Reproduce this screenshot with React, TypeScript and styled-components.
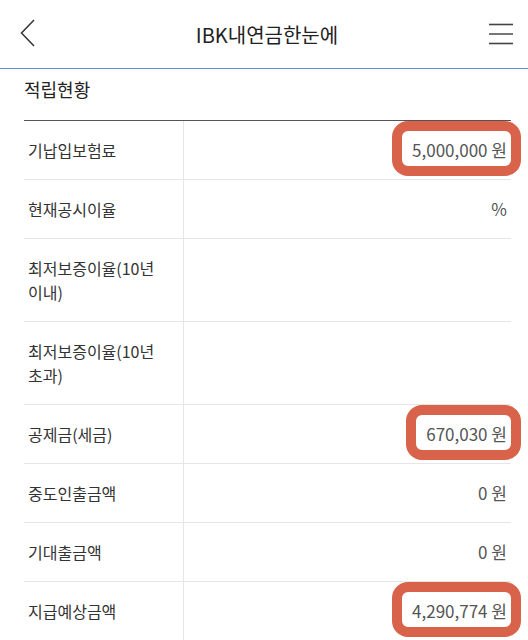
import React from 'react';
import styled, {createGlobalStyle} from 'styled-components';

type RowType = {
    label: string
    value?: string
    marked?: boolean
}

const rows: RowType[] = [
    {label: '기납입보험료', value: '5,000,000 원', marked: true},
    {label: '현재공시이율', value: '%'},
    {label: '최저보증이율(10년 이내)'},
    {label: '최저보증이율(10년 초과)'},
    {label: '공제금(세금)', value: '670,030 원', marked: true},
    {label: '중도인출금액', value: '0 원'},
    {label: '기대출금액', value: '0 원'},
    {label: '지급예상금액', value: '4,290,774 원', marked: true},
]

const GlobalStyle = createGlobalStyle`
  body {
    margin: 0;
    background: #fff;
    font-family: "Noto Sans CJK KR", "Noto Sans", sans-serif;
    color: #333;
  }
`

const App = () => {
    return (
        <Page>
            <GlobalStyle/>
            <Header>
                <IconButton>
                    <svg width="16" height="28" viewBox="0 0 16 28">
                        <polyline points="14,1 1.5,14 14,27" fill="none" stroke="#333" strokeWidth="1.5"/>
                    </svg>
                </IconButton>
                <Title>IBK내연금한눈에</Title>
                <MenuButton>
                    <svg width="26" height="22" viewBox="0 0 26 22">
                        <line x1="1" y1="1.5" x2="25" y2="1.5" stroke="#444" strokeWidth="1.6"/>
                        <line x1="1" y1="11" x2="25" y2="11" stroke="#555" strokeWidth="1.6"/>
                        <line x1="1" y1="20.5" x2="25" y2="20.5" stroke="#444" strokeWidth="1.6"/>
                    </svg>
                </MenuButton>
            </Header>
            <Section>
                <SectionTitle>적립현황</SectionTitle>
                <Table>
                    {rows.map(r => (
                        <Row key={r.label}>
                            <Label>{r.label}</Label>
                            <Value>
                                {r.value && (r.marked ? <Marked>{r.value}</Marked> : r.value)}
                            </Value>
                        </Row>
                    ))}
                </Table>
            </Section>
        </Page>
    );
};

export default App;

const Page = styled.div`
  width: 528px;
  min-height: 640px;
  background: #fff;
`

const Header = styled.header`
  height: 68px;
  display: grid;
  grid-template-columns: 1fr auto 1fr;
  align-items: center;
  padding: 0 14px 0 20px;
  border-bottom: 1px solid #5b8fd6;
`

const IconButton = styled.div`
  display: flex;
  justify-self: start;
  margin-top: -3px;
`

const MenuButton = styled.div`
  display: flex;
  justify-self: end;
  margin-top: -1px;
`

const Title = styled.h1`
  margin: 0;
  font-size: 20px;
  font-weight: 400;
  color: #222;
  line-height: 28px;
  margin-top: 2px;
`

const Section = styled.section`
  padding: 7px 17px 0 24px;
`

const SectionTitle = styled.h2`
  margin: 0 0 18px;
  font-size: 18px;
  font-weight: 400;
  line-height: 26px;
  color: #222;
`

const Table = styled.div`
  border-top: 1px solid #555;
`

const Row = styled.div`
  display: grid;
  grid-template-columns: 160px 1fr;
  border-bottom: 1px solid #e6e6e6;
`

const Label = styled.div`
  padding: 17px 8px 17px 4px;
  font-size: 16px;
  line-height: 24px;
  color: #333;
  border-right: 1px solid #e6e6e6;
  word-break: keep-all;
`

const Value = styled.div`
  padding: 17px 4px;
  font-size: 17px;
  line-height: 24px;
  color: #555;
  text-align: right;
`

const Marked = styled.span`
  position: relative;

  &::before {
    content: '';
    position: absolute;
    top: -16px;
    bottom: -14px;
    left: -20px;
    right: -14px;
    border: 10px solid #d9634a;
    border-radius: 16px;
  }
`
